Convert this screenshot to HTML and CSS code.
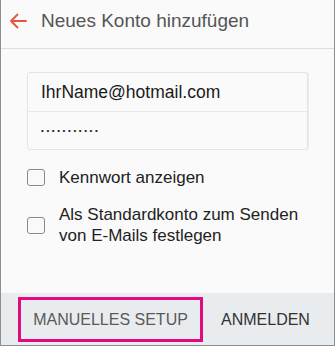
FILE: index.html
```html
<!DOCTYPE html>
<html lang="de">
<head>
<meta charset="utf-8">
<title>Neues Konto hinzufügen</title>
<link rel="stylesheet" href="styles.css">
</head>
<body>
<div class="screen">
  <header class="bar">
    <svg class="back" width="18" height="16" viewBox="0 0 18 16" aria-hidden="true">
      <path d="M17 8H2M8.5 1.5L2 8l6.5 6.5" fill="none" stroke="#e8553e" stroke-width="1.8" stroke-linecap="round" stroke-linejoin="round"/>
    </svg>
    <h1 class="title">Neues Konto hinzufügen</h1>
  </header>
  <main class="content">
    <div class="fields">
      <div class="field">IhrName@hotmail.com</div>
      <div class="field"><span class="dots">•••••••••••</span></div>
    </div>
    <label class="check">
      <span class="box"></span>
      <span class="label">Kennwort anzeigen</span>
    </label>
    <label class="check">
      <span class="box"></span>
      <span class="label">Als Standardkonto zum Senden<br>von E-Mails festlegen</span>
    </label>
  </main>
  <footer class="actions">
    <button class="btn highlighted">MANUELLES SETUP</button>
    <button class="btn">ANMELDEN</button>
  </footer>
</div>
</body>
</html>
```
FILE: styles.css
```css
* { box-sizing: border-box; }
html, body { margin: 0; padding: 0; }
body {
  width: 335px;
  height: 346px;
  font-family: "Liberation Sans", Arial, sans-serif;
  background: #fafafa;
}
.screen {
  width: 335px;
  height: 346px;
  display: flex;
  flex-direction: column;
  border-left: 1px solid #8e8e8e;
  border-right: 1px solid #8e8e8e;
  border-bottom: 1px solid #8e8e8e;
  background: #fafafa;
}
.bar {
  height: 49px;
  flex: none;
  display: flex;
  align-items: center;
  padding: 0 0 6px 8px;
  border-bottom: 1px solid #dddddd;
}
.back { flex: none; }
.title {
  margin: 0 0 0 14px;
  font-size: 19px;
  font-weight: normal;
  color: #555555;
}
.content {
  flex: 1;
  padding: 23px 26px 0 26px;
}
.fields {
  border: 1px solid #e4e4e4;
  border-radius: 3px;
  background: #fafafa;
  box-shadow: 1px 0 0 #ececec;
}
.field {
  height: 38px;
  display: flex;
  align-items: center;
  padding-left: 13px;
  font-size: 17.5px;
  color: #1a1a1a;
}
.field + .field {
  border-top: 1px solid #e8e8e8;
}
.dots {
  display: block;
  font-size: 8px;
  line-height: 8px;
  letter-spacing: 2.6px;
  color: #222;
  margin-top: 1px;
}
.check {
  display: flex;
  align-items: center;
  gap: 14px;
  margin-top: 17px;
}
.check + .check { margin-top: 16px; }
.box {
  flex: none;
  width: 18px;
  height: 17px;
  border: 1.5px solid #8a8a8a;
  border-radius: 3px;
  background: #fafafa;
}
.label {
  font-size: 17px;
  line-height: 21px;
  color: #222222;
}
.actions {
  height: 52px;
  flex: none;
  display: flex;
  align-items: center;
  padding-left: 17px;
  gap: 5px;
  background: #e9ecef;
}
.btn {
  font-family: "Liberation Sans", Arial, sans-serif;
  font-size: 16px;
  background: none;
  border: 3px solid transparent;
  color: #333333;
  padding: 0 10px;
  height: 45px;
  margin-top: 1px;
}
.btn.highlighted {
  border-color: #e5097f;
  color: #5a5a5a;
  width: 185px;
}
```
